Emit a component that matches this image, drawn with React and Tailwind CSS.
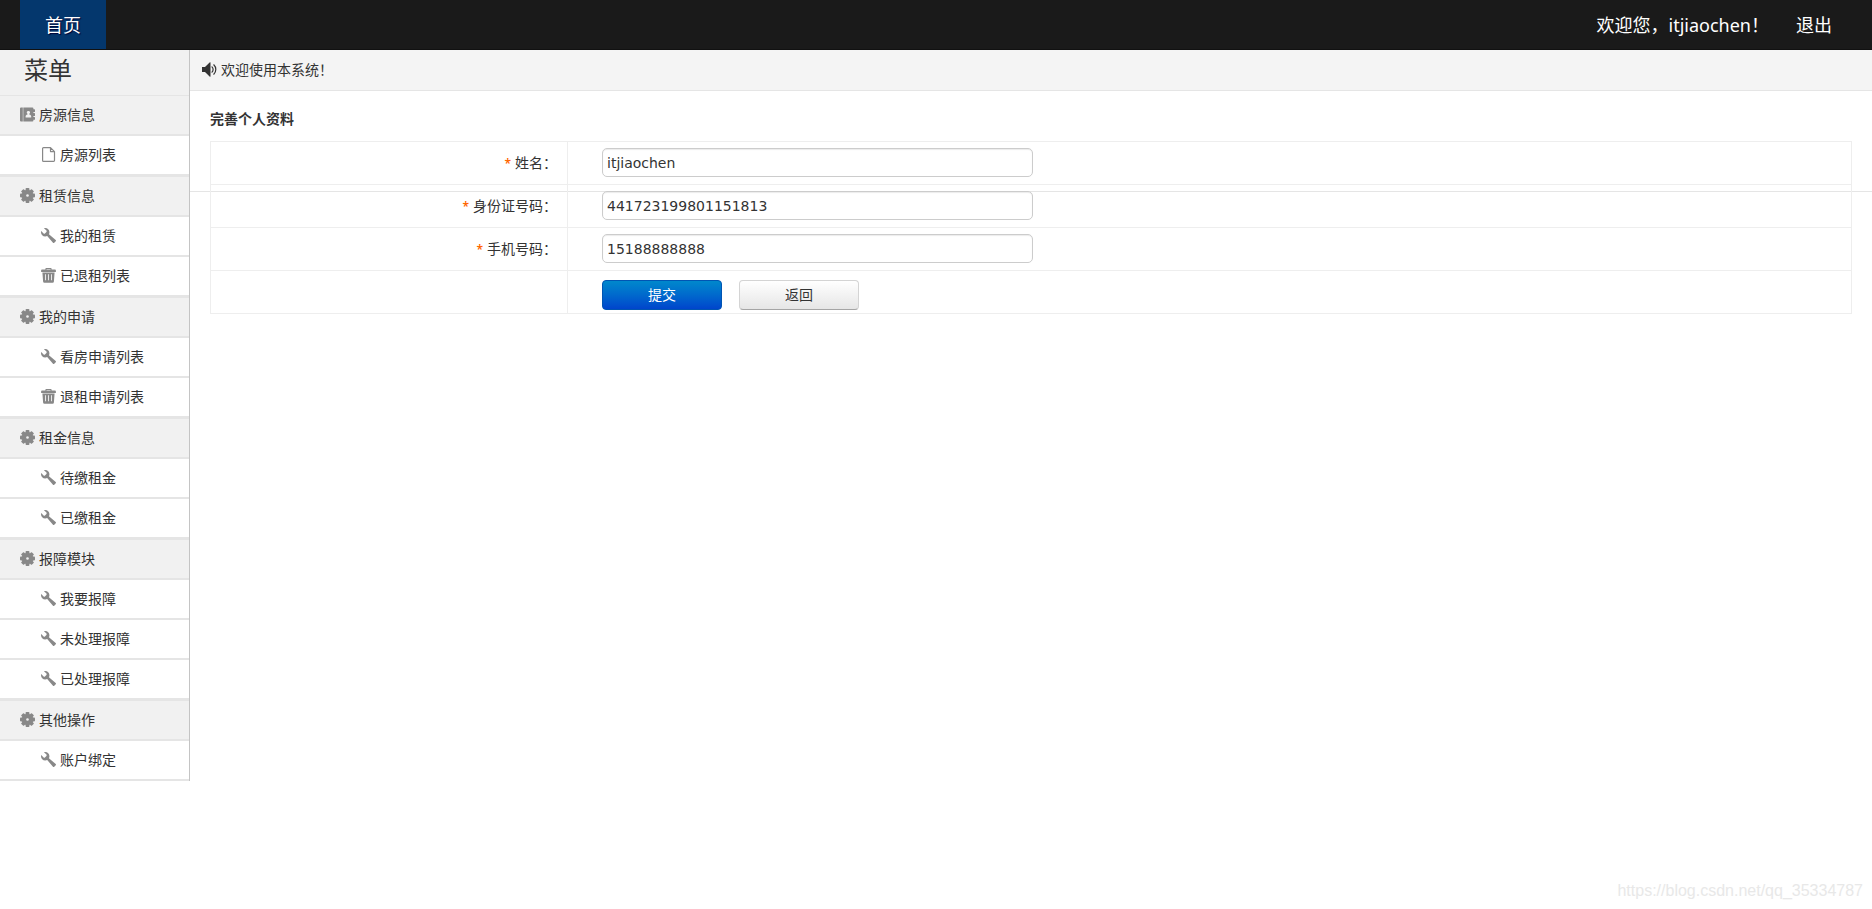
import { ImWrench } from "react-icons/im";

function BookIcon({ className }) {
  return (
    <svg viewBox="0 0 15 15" className={className} aria-hidden="true">
      <path
        fill="currentColor"
        fillRule="evenodd"
        d="M1 .5h1.8v14H1a1 1 0 0 1-1-1v-12a1 1 0 0 1 1-1zM3.300.5h9.100a1 1 0 0 1 1 1v.7h1a.6.6 0 0 1 .6.6v1.6a.6.6 0 0 1-.6.6h-1v1h1a.6.6 0 0 1 .6.6v1.8a.6.6 0 0 1-.6.6h-1v1h1a.6.6 0 0 1 .6.6v1.6a.6.6 0 0 1-.6.6h-1v.7a1 1 0 0 1-1 1h-9.100zM8.400 4a1.500 1.500 0 0 0-.9 2.800v.7c-1.200.3-1.900 1-1.900 1.900v1.100h5.600v-1.100c0-.9-.7-1.600-1.900-1.900v-.7a1.500 1.500 0 0 0-.9-2.800z"
      />
    </svg>
  );
}

function FileIcon({ className }) {
  return (
    <svg viewBox="0 0 15 15" className={className} aria-hidden="true">
      <path
        fill="none"
        stroke="currentColor"
        strokeWidth="1.2"
        strokeLinejoin="round"
        d="M1.6 1.5a.9.9 0 0 1 .9-.9h7l4 4v8.900a.9.9 0 0 1-.9.9h-10.100a.9.9 0 0 1-.9-.9zM9.500.6v4h4"
      />
    </svg>
  );
}

const TEETH = [0, 45, 90, 135];

function CogIcon({ className }) {
  return (
    <svg viewBox="0 0 15 15" className={className} aria-hidden="true">
      {TEETH.map((angle) => (
        <rect
          key={angle}
          x="5.6"
          y="0"
          width="3.8"
          height="15"
          rx="0.8"
          fill="currentColor"
          transform={`rotate(${angle} 7.5 7.5)`}
        />
      ))}
      <circle cx="7.5" cy="7.5" r="5.8" fill="currentColor" />
      <circle cx="7.5" cy="7.5" r="1.3" fill="#f1f1f1" />
    </svg>
  );
}

function TrashIcon({ className }) {
  return (
    <svg viewBox="0 0 15 15" className={className} aria-hidden="true">
      <path
        fill="currentColor"
        fillRule="evenodd"
        d="M5.200 0h4.600a.8.8 0 0 1 .8.8v.7h3.400a.9.9 0 0 1 .9.9v1.600h-14.800v-1.600a.9.9 0 0 1 .9-.9h3.400v-.7a.8.8 0 0 1 .8-.8zM5.500.9v.6h4v-.6zM1.400 4.600h12.200l-.7 9a1.300 1.300 0 0 1-1.300 1.200h-8.200a1.300 1.300 0 0 1-1.300-1.200zM4.200 6.300v6h.8v-6zM7.100 6.300v6h.8v-6zM10 6.300v6h.8v-6z"
      />
    </svg>
  );
}

function VolumeIcon({ className }) {
  return (
    <svg viewBox="0 0 15 15" className={className} aria-hidden="true">
      <path fill="currentColor" d="M0 5h3l4.600-4.600a.5.5 0 0 1 .9.4v13.400a.5.5 0 0 1-.9.4l-4.600-4.600h-3z" />
      <path
        fill="none"
        stroke="currentColor"
        strokeWidth="1.2"
        strokeLinecap="round"
        d="M10 4.900a3.600 3.600 0 0 1 0 5.200M11.800 2.800a6.500 6.500 0 0 1 0 9.400"
      />
    </svg>
  );
}

const MENU = [
  { title: "房源信息", icon: BookIcon, items: [["房源列表", FileIcon]] },
  { title: "租赁信息", icon: CogIcon, items: [["我的租赁", ImWrench], ["已退租列表", TrashIcon]] },
  { title: "我的申请", icon: CogIcon, items: [["看房申请列表", ImWrench], ["退租申请列表", TrashIcon]] },
  { title: "租金信息", icon: CogIcon, items: [["待缴租金", ImWrench], ["已缴租金", ImWrench]] },
  {
    title: "报障模块",
    icon: CogIcon,
    items: [["我要报障", ImWrench], ["未处理报障", ImWrench], ["已处理报障", ImWrench]],
  },
  { title: "其他操作", icon: CogIcon, items: [["账户绑定", ImWrench]] },
];

const FIELDS = [
  { id: "name", label: "姓名：", value: "itjiaochen" },
  { id: "idcard", label: "身份证号码：", value: "441723199801151813" },
  { id: "phone", label: "手机号码：", value: "15188888888" },
];

function TopBar() {
  return (
    <header className="flex h-[50px] items-stretch justify-between border-b border-[#111] bg-[#1a1a1a] pr-10 pl-5 text-lg text-white">
      <nav className="flex">
        <a href="#home" className="flex items-center bg-[#04376d] px-[25px] text-shadow-[1px_1px_1px_#000033]">
          首页
        </a>
      </nav>
      <div className="flex items-center gap-[27px]">
        <span>欢迎您，itjiaochen！</span>
        <a href="#logout">退出</a>
      </div>
    </header>
  );
}

function Sidebar() {
  return (
    <aside className="w-[190px] shrink-0 border-r border-[#c4c4c4]">
      <h1 className="flex h-[45px] items-start bg-[#f1f1f1] pt-0.5 pl-6 text-2xl leading-9">菜单</h1>
      {MENU.map(({ title, icon: Icon, items }) => (
        <section key={title}>
          <a
            href="#section"
            className="flex h-[41px] items-center gap-1 border-t border-b-2 border-[#e5e5e5] bg-[#f1f1f1] pb-px pl-5"
          >
            <Icon className="mb-px size-[15px] text-[#888]" />
            {title}
          </a>
          <ul>
            {items.map(([label, ItemIcon]) => (
              <li key={label}>
                <a href="#item" className="flex h-10 items-center gap-1 border-b-2 border-[#e5e5e5] pb-px pl-[41px]">
                  <ItemIcon className="mb-px size-[15px] text-[#888]" />
                  {label}
                </a>
              </li>
            ))}
          </ul>
        </section>
      ))}
    </aside>
  );
}

function ProfileForm() {
  return (
    <form className="px-5" onSubmit={(e) => e.preventDefault()}>
      <h2 className="pt-[18px] pb-3 leading-5 font-bold">完善个人资料</h2>
      <table className="w-full table-fixed border-collapse">
        <tbody>
          {FIELDS.map(({ id, label, value }) => (
            <tr key={id} className="h-[43px]">
              <th className="w-[357px] border border-[#eee] pr-[10px] text-right font-normal">
                <label htmlFor={id}>
                  <span className="mr-1 text-xs font-semibold text-[#ff6600]">*</span>
                  {label}
                </label>
              </th>
              <td className="border border-[#eee] pb-0.5 pl-[34px]">
                <input
                  id={id}
                  type="text"
                  defaultValue={value}
                  className="block h-[29px] w-[431px] rounded-[5px] border border-[#ccc] bg-white px-1 pt-0.5 font-['DejaVu_Sans'] text-sm shadow-[inset_0_1px_1px_rgba(0,0,0,0.08)] outline-none"
                />
              </td>
            </tr>
          ))}
          <tr className="h-[43px]">
            <td className="border border-[#eee]" />
            <td className="border border-[#eee] pt-1.5 pl-[34px]">
              <div className="flex gap-[17px]">
                <button
                  type="submit"
                  className="h-[30px] w-[120px] rounded-[4px] border border-[#0055b3] bg-linear-to-b from-[#0088cc] to-[#0044cc] text-white"
                >
                  提交
                </button>
                <button
                  type="button"
                  className="h-[30px] w-[120px] rounded-[4px] border border-[#d4d4d4] border-b-[#a5a5a5] bg-linear-to-b from-white to-[#e6e6e6]"
                >
                  返回
                </button>
              </div>
            </td>
          </tr>
        </tbody>
      </table>
    </form>
  );
}

export default function App() {
  return (
    <div className="relative min-h-screen bg-white font-['Noto_Sans','Noto_Sans_CJK_SC',sans-serif] text-sm text-[#333]">
      <TopBar />
      <div className="flex items-start">
        <Sidebar />
        <main className="min-w-0 flex-1">
          <div className="flex h-[41px] items-center gap-1 border-b border-[#e5e5e5] bg-[#f4f4f4] pb-px pl-3">
            <VolumeIcon className="mb-px size-[15px]" />
            欢迎使用本系统！
          </div>
          <div className="h-[101px] border-b border-[#e5e5e5]">
            <ProfileForm />
          </div>
        </main>
      </div>
      <p className="absolute right-[9px] bottom-1.5 font-['Liberation_Sans'] text-base text-[#e8e8e8]">
        https://blog.csdn.net/qq_35334787
      </p>
    </div>
  );
}
